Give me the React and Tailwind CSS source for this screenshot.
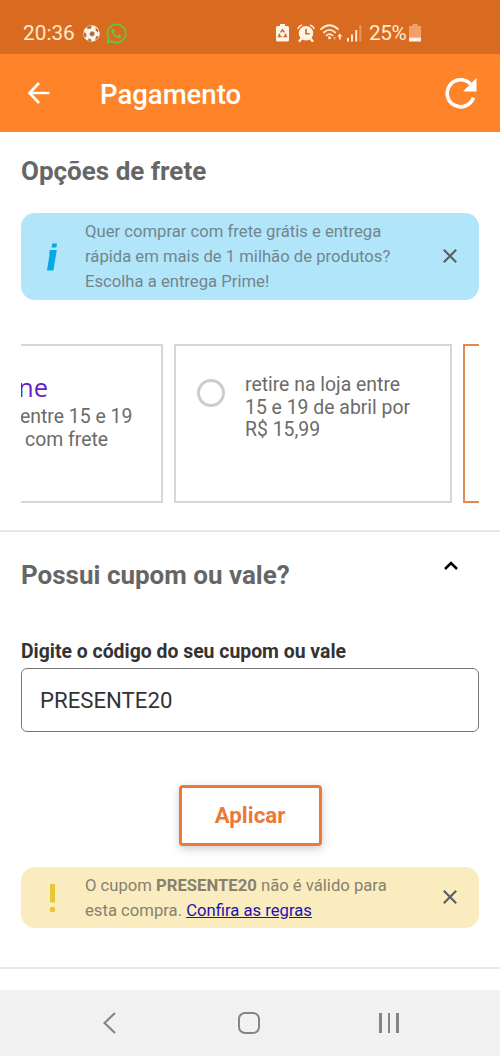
import React from "react";
import { FaWhatsapp } from "react-icons/fa";

function StatusBar() {
  return (
    <div className="flex h-[54px] items-center bg-[#d96b21] pt-3 pl-[23px] text-[#ffe9cf]">
      <span className="w-[52px] text-[20.8px] leading-6 whitespace-nowrap">20:36</span>
      <svg className="ml-2 h-[17px] w-[17px]" viewBox="0 0 17 17">
        <circle cx="8.5" cy="8.5" r="8.3" fill="#fff3e4" />
        <g fill="#a8704a">
          <path d="M8 6.2 11.3 7 11.5 10.2 8.6 11.6 6.2 9.2Z" />
          <path d="M5 1.2 8.8.8 8 3.4 5.2 4.1 3.4 2.9Z" />
          <path d="M12.6 2.4 15.6 5.2 14.8 7.4 12.8 5.4Z" />
          <path d="M.8 7.2 3 8.2 3.6 11.3 2 12.8.7 10Z" />
          <path d="M5.4 13.2 8.2 14.4 8.4 16.6 5.2 15.8Z" />
          <path d="M13.5 11 15.8 11.2 13.8 14.4 12 14.7Z" />
        </g>
      </svg>
      <FaWhatsapp className="ml-[5px] h-[23px] w-[23px] text-[#62c83c]" />
      <svg className="ml-[148px] h-[18px] w-[13px]" viewBox="0 0 13 18">
        <path d="M4 0h5v2h2.5q1.5 0 1.5 1.5V16q0 1.5-1.5 1.5h-10Q0 17.5 0 16V3.5Q0 2 1.5 2H4Z" fill="#fff3e4" />
        <g fill="none" stroke="#c76a2c" strokeWidth="1.5">
          <path d="M4.6 8.4 6.5 5.8 8.4 8.4" />
          <path d="M3.8 9.8 2.8 12.6H5.6" />
          <path d="M9.2 9.8 10.2 12.6H7.4" />
        </g>
      </svg>
      <svg className="ml-[8px] h-[18px] w-[18px]" viewBox="0 0 18 18">
        <g fill="none" stroke="#fff3e4" strokeWidth="1.5" strokeLinecap="round">
          <path d="M1 4.5Q2 2 4.5 1.2M17 4.5Q16 2 13.5 1.2" />
          <path d="M4.5 14.5 2.6 17M13.5 14.5 15.4 17" strokeWidth="2.2" />
        </g>
        <circle cx="9" cy="9.3" r="7.2" fill="#fff3e4" />
        <path d="M9 5v4.8h3.6" fill="none" stroke="#c76a2c" strokeWidth="1.6" />
      </svg>
      <svg className="ml-[5px] h-[18px] w-[23px]" viewBox="0 0 23 18">
        <g fill="none" stroke="#ffe9cf" strokeWidth="1.8" strokeLinecap="round">
          <path d="M1 5.2Q9.5-2.6 18 5.2" />
          <path d="M3.8 8.5Q9.5 3.2 15.2 8.5" />
          <path d="M6.5 11.4Q9.5 8.8 12.5 11.4" />
        </g>
        <circle cx="9.5" cy="13.7" r="1.5" fill="#ffe9cf" />
        <path d="M12.8 13h3.6L14.6 16.5Z" fill="#f09a5c" />
        <path d="M19.8 9.5 22.3 12.4H20.7V15.5H18.9V12.4H17.3Z" fill="#ffe9cf" />
      </svg>
      <svg className="ml-[4px] h-[18px] w-[15px]" viewBox="0 0 15 18">
        <path d="M0 14h2v3.5H0zM4 10.5h2V17.5H4zM8.2 6h2V17.5h-2z" fill="#ffe9cf" />
        <path d="M12.3 1h2V17.5h-2z" fill="#ec955a" />
      </svg>
      <span className="ml-[7px] w-[39px] text-[20.8px] leading-6 tracking-[-0.5px] whitespace-nowrap">25%</span>
      <svg className="ml-[1px] h-[18px] w-[12px]" viewBox="0 0 12 18">
        <path d="M3.5 0h5v2H12V13.5H0V2h3.5Z" fill="#f2a06a" />
        <path d="M0 13.5h12V17.5H0Z" fill="#fff3e4" />
      </svg>
    </div>
  );
}

function Header() {
  return (
    <header className="flex h-[78px] items-center bg-[#ff8329] pl-[27px] text-white">
      <svg className="h-6 w-6" viewBox="0 0 24 24" fill="none" stroke="currentColor" strokeWidth="2.6">
        <path d="M22.5 12H2.5M12 2 2.5 12 12 22" />
      </svg>
      <h1 className="mt-[3px] ml-[49px] text-[27.5px] font-medium">Pagamento</h1>
      <svg className="mr-[23px] ml-auto h-[32px] w-[32px]" viewBox="0 0 32 32">
        <path d="M28.5 20.5A13.5 13.5 0 1 1 25.5 7" fill="none" stroke="currentColor" strokeWidth="3.6" />
        <path d="M31.5 1V14.5H18Z" fill="currentColor" />
      </svg>
    </header>
  );
}

function CloseIcon() {
  return (
    <svg className="h-[14px] w-[14px]" viewBox="0 0 14 14" fill="none" stroke="#5b6063" strokeWidth="2.2">
      <path d="M.8.8 13.2 13.2M13.2.8.8 13.2" />
    </svg>
  );
}

function ShippingOptions() {
  return (
    <section className="h-[400px] border-b-2 border-[#e8e8e8] px-[21px] pt-[23px]">
      <h2 className="text-[26px] leading-8 font-bold text-[#666]">Opções de frete</h2>

      <div className="mt-[26px] flex h-[87px] items-center rounded-[14px] bg-[#b1e6fa] pr-[22px]">
        <svg className="ml-[26px] h-[28px] w-[11px]" viewBox="0 0 11 28" fill="#06a9e6">
          <path d="M5.2 0.5h4.8L9.4 4.5H4.6Z" />
          <path d="M2.8 7H9.8L6.4 27.5H0L2.6 11H2.2Z" />
        </svg>
        <p className="ml-[27px] text-[16.67px] leading-[25px] whitespace-nowrap text-[#72858d]">
          Quer comprar com frete grátis e entrega
          <br />
          rápida em mais de 1 milhão de produtos?
          <br />
          Escolha a entrega Prime!
        </p>
        <button className="mb-[2px] ml-auto">
          <CloseIcon />
        </button>
      </div>

      <div className="mt-[44px] flex h-[159px] gap-[11px] overflow-hidden text-[19.4px] leading-[22.5px] text-[#6b6b6b]">
        <div className="w-[142px] shrink-0 border-2 border-l-0 border-[#d6d6d6] pt-[25px]">
          <p className="-ml-[3px] font-['Open_Sans',sans-serif] text-[25.5px] leading-[32px] text-[#6420c4]">ne</p>
          <p className="-ml-px mt-[3px] whitespace-nowrap">
            entre 15 e 19
            <br />
            <span className="ml-[5px]">com frete</span>
          </p>
        </div>
        <div className="flex w-[278px] shrink-0 border-2 border-[#d6d6d6] pt-[28px] pl-[21px]">
          <span className="mt-[5px] h-[28px] w-[28px] shrink-0 rounded-full border-3 border-[#ccc]" />
          <p className="ml-[20px] whitespace-nowrap">
            retire na loja entre
            <br />
            15 e 19 de abril por
            <br />
            R$ 15,99
          </p>
        </div>
        <div className="w-[278px] shrink-0 border-2 border-[#df8a50]" />
      </div>
    </section>
  );
}

function Coupon() {
  return (
    <section className="h-[437px] border-b-2 border-[#e8e8e8] px-[21px] pt-[27px]">
      <div className="flex h-8 justify-between pr-[21px]">
        <h2 className="text-[26px] leading-8 font-bold text-[#666]">Possui cupom ou vale?</h2>
        <svg className="mt-[2px] h-[9px] w-[14px]" viewBox="0 0 14 9" fill="none" stroke="#000" strokeWidth="2.5">
          <path d="M1 8 7 2 13 8" />
        </svg>
      </div>

      <label className="mt-[49px] block text-[19.4px] leading-6 font-bold text-[#333]">
        Digite o código do seu cupom ou vale
      </label>
      <div className="mt-[4px] flex h-[64px] items-center rounded-md border border-[#777] pt-px pl-[18px] text-[22.2px] text-[#333]">
        PRESENTE20
      </div>

      <button className="mx-auto mt-[53px] block h-[61px] w-[143px] rounded border-3 border-[#eb7937] bg-white text-[22.3px] font-bold text-[#eb7937] shadow-[0_3px_8px_rgba(60,60,90,0.25)]">
        Aplicar
      </button>

      <div className="mt-[21px] flex h-[61px] items-center rounded-[14px] bg-[#fbecbf] pr-[22px]">
        <svg className="ml-[29px] h-[28px] w-[5px]" viewBox="0 0 5 28" fill="#e5c832">
          <rect width="5" height="18.5" rx=".5" />
          <rect y="23" width="5" height="5" rx="1" />
        </svg>
        <p className="ml-[30px] text-[16.67px] leading-[25px] whitespace-nowrap text-[#85816f]">
          O cupom <b>PRESENTE20</b> não é válido para
          <br />
          esta compra. <a className="text-[#2412ac] underline">Confira as regras</a>
        </p>
        <button className="mb-[2px] ml-auto">
          <CloseIcon />
        </button>
      </div>
    </section>
  );
}

function NavBar() {
  return (
    <nav className="mt-auto flex h-[66px] items-center bg-[#f1f1f1] pl-[103px] text-[#858585]">
      <svg className="h-[22px] w-[13px]" viewBox="0 0 13 22" fill="none" stroke="currentColor" strokeWidth="2.2">
        <path d="M12 1 1.5 11 12 21" />
      </svg>
      <span className="ml-[122px] h-[22px] w-[22px] rounded-[7px] border-2 border-current" />
      <div className="ml-[119px] flex h-[20px] gap-[6px]">
        <span className="w-[2.5px] bg-current" />
        <span className="w-[2.5px] bg-current" />
        <span className="w-[2.5px] bg-current" />
      </div>
    </nav>
  );
}

export default function App() {
  return (
    <div className="flex h-[1056px] w-[500px] flex-col overflow-hidden bg-white font-[Roboto,sans-serif]">
      <StatusBar />
      <Header />
      <ShippingOptions />
      <Coupon />
      <NavBar />
    </div>
  );
}
